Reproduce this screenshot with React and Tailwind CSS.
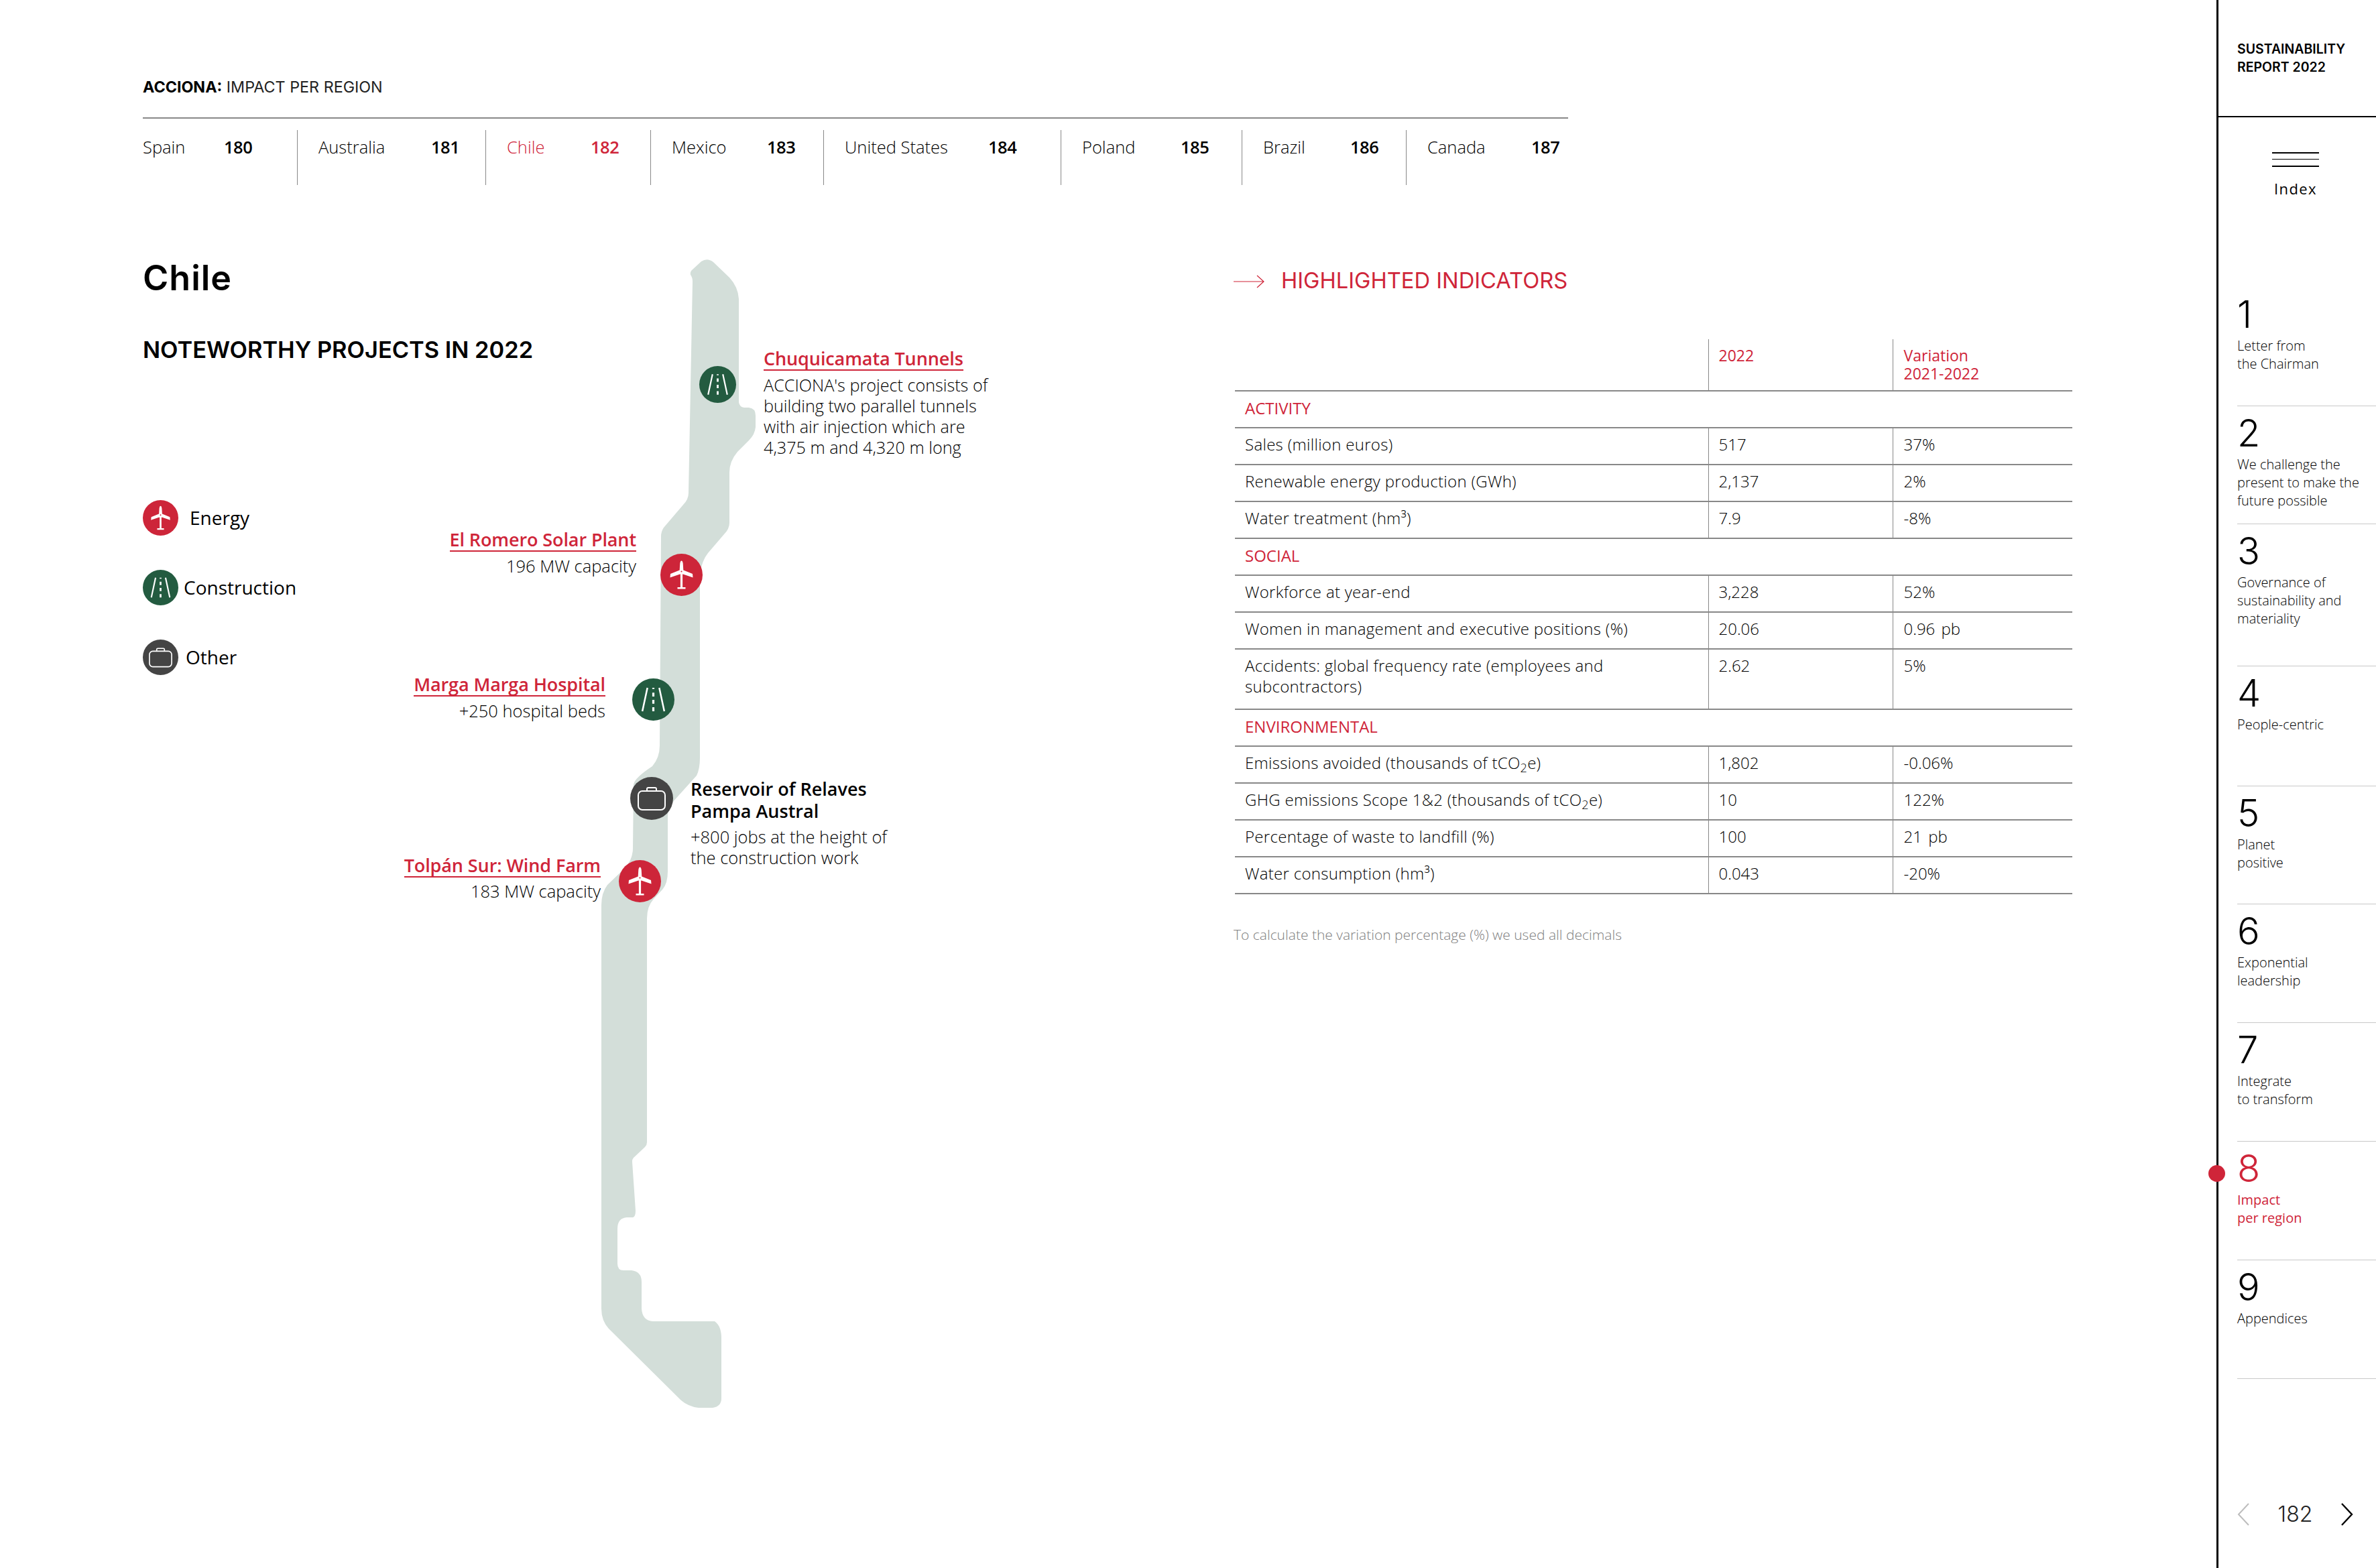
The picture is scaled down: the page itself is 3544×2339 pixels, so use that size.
import React from 'react';

const BODY = "font-['Open_Sans',sans-serif]";
const HEAD = "font-['Inter',sans-serif]";

const tabs = [
  { label: 'Spain', num: '180', w: 'w-[230px]', numCls: 'left-[121px]' },
  { label: 'Australia', num: '181', w: 'w-[281px]', numCls: 'left-[199px]' },
  { label: 'Chile', num: '182', w: 'w-[246px]', numCls: 'left-[156px]', active: true },
  { label: 'Mexico', num: '183', w: 'w-[258px]', numCls: 'left-[173px]' },
  { label: 'United States', num: '184', w: 'w-[354px]', numCls: 'left-[245px]' },
  { label: 'Poland', num: '185', w: 'w-[270px]', numCls: 'left-[178px]' },
  { label: 'Brazil', num: '186', w: 'w-[245px]', numCls: 'left-[161px]' },
  { label: 'Canada', num: '187', w: 'w-[242px]', numCls: 'left-[186px]' },
];

const chapters = [
  { n: '1', lines: ['Letter from', 'the Chairman'], h: 'h-[177px]' },
  { n: '2', lines: ['We challenge the', 'present to make the', 'future possible'], h: 'h-[176px]' },
  { n: '3', lines: ['Governance of', 'sustainability and', 'materiality'], h: 'h-[212px]' },
  { n: '4', lines: ['People-centric'], h: 'h-[179px]' },
  { n: '5', lines: ['Planet', 'positive'], h: 'h-[176px]' },
  { n: '6', lines: ['Exponential', 'leadership'], h: 'h-[177px]' },
  { n: '7', lines: ['Integrate', 'to transform'], h: 'h-[177px]' },
  { n: '8', lines: ['Impact', 'per region'], h: 'h-[177px]', active: true },
  { n: '9', lines: ['Appendices'], h: 'h-[177px]' },
];

const TurbineIcon = () => (
  <svg viewBox="-31.5 -31.5 63 63" className="w-full h-full">
    <path
      fill="#fff"
      d="M-2.8 -7 L-2.2 -17 Q-1.6 -21 0 -21 Q1.6 -21 2.2 -17 L2.8 -7 L16.5 -1.5 L17 4 L3 -0.8 L1.6 -1 L1.6 18.5 L6 18.5 L6 21 L-6 21 L-6 18.5 L-1.6 18.5 L-1.6 -1 L-3 -0.8 L-17 4 L-16.5 -1.5 Z"
    />
    <circle cx="0" cy="-5" r="1.1" fill="#cd2539" />
  </svg>
);

const RoadIcon = () => (
  <svg viewBox="-27.5 -27.5 55 55" className="w-full h-full">
    <path d="M-7.7 -15.3 L-14.3 15.3 M7.7 -15.3 L14.3 15.3" stroke="#fff" strokeWidth="2.2" fill="none" />
    <path d="M0 -15.3 V-13.7 M0 -9 V-4 M0 0.5 V5.5 M0 10 V15.3" stroke="#fff" strokeWidth="2.8" fill="none" />
  </svg>
);

const CaseIcon = () => (
  <svg viewBox="-32 -32 64 64" className="w-full h-full">
    <rect x="-20" y="-11" width="40" height="28" rx="6" stroke="#fff" strokeWidth="2" fill="none" />
    <path d="M-7 -11 V-14 Q-7 -16 -5 -16 H5 Q7 -16 7 -14 V-11" stroke="#fff" strokeWidth="2" fill="none" />
  </svg>
);

const icons = {
  energy: { bg: 'bg-[#cd2539]', Icon: TurbineIcon },
  construction: { bg: 'bg-[#235b40]', Icon: RoadIcon },
  other: { bg: 'bg-[#444444]', Icon: CaseIcon },
};

const Badge = ({ type, className }) => {
  const { bg, Icon } = icons[type];
  return (
    <div className={`rounded-full shrink-0 ${bg} ${className}`}>
      <Icon />
    </div>
  );
};

const ProjectTitle = ({ children }) => (
  <div className="text-[27px] leading-[32px] font-semibold text-[#cf2539]">
    <span className="inline-block border-b-2 border-[#cf2539] tracking-[-0.1px]">{children}</span>
  </div>
);

const Row = ({ label, a, b, tall }) => (
  <tr className={tall ? 'h-[90px]' : 'h-[55px]'}>
    <td className="align-top border-b-2 border-[#888] pl-[15px] pt-[8px] pr-[100px] tracking-[0.3px]">{label}</td>
    <td className="align-top border-b-2 border-l border-[#888] pl-[15px] pt-[8px]">{a}</td>
    <td className="align-top border-b-2 border-l border-[#888] pl-[16px] pt-[8px] [word-spacing:3px]">{b}</td>
  </tr>
);

const Category = ({ children }) => (
  <tr className="h-[55px]">
    <td colSpan={3} className="border-b-2 border-[#888] pl-[15px] pb-[5px] font-normal text-[#cf2539]">{children}</td>
  </tr>
);

const Sidebar = () => (
  <aside className={`w-[238px] h-full shrink-0 border-l-[3px] border-black relative ${BODY}`}>
    <div className="h-[175px] border-b-2 border-black pl-[28px] pt-[60px]">
      <div className={`${HEAD} text-[19.5px] leading-[27px] font-semibold text-black`}>
        SUSTAINABILITY
        <br />
        REPORT 2022
      </div>
    </div>
    <div className="h-[254px] flex flex-col items-center pr-[5px] pt-[52px]">
      <div className="w-[70px] flex flex-col">
        <div className="h-[2px] bg-black" />
        <div className="h-[1px] bg-black mt-[8px]" />
        <div className="h-[2px] bg-black mt-[9px]" />
      </div>
      <div className="text-[22px] leading-[28px] tracking-[1.4px] mt-[18px] text-black">Index</div>
    </div>
    <div className="pl-[28px]">
      {chapters.map((c) => (
        <div key={c.n} className={`${c.h} border-b border-[#c8c8c8] relative ${c.active ? 'text-[#cf2539]' : 'text-black'}`}>
          <div className={`${HEAD} text-[56px] leading-[60px] font-light pt-[10px] h-[68px]`}>{c.n}</div>
          <div className={`text-[20px] leading-[27px] mt-[5px] ${c.active ? 'font-normal' : 'font-light'}`}>
            {c.lines.map((l) => (
              <div key={l}>{l}</div>
            ))}
          </div>
          {c.active && <div className="absolute left-[-43px] top-[35px] w-[25px] h-[25px] rounded-full bg-[#cf2539]" />}
        </div>
      ))}
    </div>
    <div className="absolute left-[28px] right-[34px] top-[2241px] flex items-center justify-between">
      <svg viewBox="0 0 18 34" className="w-[18px] h-[34px]">
        <path d="M17 1 L2 17 L17 33" stroke="#bdbdbd" strokeWidth="2" fill="none" />
      </svg>
      <div className={`${HEAD} text-[32px] leading-[36px] font-light text-[#222]`}>182</div>
      <svg viewBox="0 0 18 34" className="w-[18px] h-[34px]">
        <path d="M1 1 L16 17 L1 33" stroke="#000" strokeWidth="2.4" fill="none" />
      </svg>
    </div>
  </aside>
);

const MapCanvas = () => (
  <div className="relative w-[900px] h-[1730px] shrink-0 text-[25.5px] leading-[31px] font-light text-black">
    <svg viewBox="880 380 260 1730" className="absolute left-[280px] top-0 w-[260px] h-[1730px]">
      <path
        fill="#d3ded9"
        d="M1030 410 Q1029 405 1033 402 L1046 390 Q1055 384 1064 391 L1088 414 Q1101 428 1102 446 L1102 600 Q1103 607 1110 608 L1117 608 Q1127 609 1127 620 L1127 637 Q1126 648 1117 657 L1100 674 Q1088 688 1088 705 L1088 780 Q1088 789 1080 797 L1056 825 Q1047 836 1044 856 L1044 1130 Q1044 1147 1039 1157 L1003 1197 Q996 1206 996 1218 L996 1300 Q996 1318 988 1327 L975 1341 Q965 1352 965 1370 L965 1704 Q965 1708 962 1711 L945 1727 Q943 1729 943 1733 L948 1806 Q948 1815 944 1816 L935 1816 Q921 1817 921 1833 L921 1885 Q921 1895 930 1895 L942 1895 Q957 1897 957 1912 L957 1952 Q958 1970 974 1971 L1066 1971 Q1076 1978 1076 1996 L1076 2086 Q1076 2098 1063 2100 L1042 2100 Q1026 2098 1015 2088 L908 1982 Q897 1970 897 1952 L897 1350 Q897 1332 906 1320 L932 1295 Q944 1282 944 1265 L945 1170 Q947 1160 973 1143 Q984 1130 984 1112 L986 800 Q986 793 990 787 L1019 753 Q1027 745 1027 735 L1033 420 Q1033 414 1030 410 Z"
      />
    </svg>

    <Badge type="construction" className="absolute left-[443px] top-[166px] w-[55px] h-[55px]" />
    <Badge type="energy" className="absolute left-[385px] top-[446px] w-[63px] h-[63px]" />
    <Badge type="construction" className="absolute left-[343px] top-[632px] w-[63px] h-[63px]" />
    <Badge type="other" className="absolute left-[340px] top-[779px] w-[64px] h-[64px]" />
    <Badge type="energy" className="absolute left-[323px] top-[903px] w-[63px] h-[63px]" />

    <div className="absolute left-[539px] top-[139px] w-[380px]">
      <ProjectTitle>Chuquicamata Tunnels</ProjectTitle>
      <div className="mt-[6px] text-[25.2px]">
        ACCIONA's project consists of
        <br />
        building two parallel tunnels
        <br />
        with air injection which are
        <br />
        4,375 m and 4,320 m long
      </div>
    </div>
    <div className="absolute right-[551px] top-[409px] text-right whitespace-nowrap">
      <ProjectTitle>El Romero Solar Plant</ProjectTitle>
      <div className="mt-[6px]">196 MW capacity</div>
    </div>
    <div className="absolute right-[597px] top-[625px] text-right whitespace-nowrap">
      <ProjectTitle>Marga Marga Hospital</ProjectTitle>
      <div className="mt-[6px]">+250 hospital beds</div>
    </div>
    <div className="absolute left-[430px] top-[780px] whitespace-nowrap">
      <div className="text-[27px] leading-[33px] font-semibold text-black">
        Reservoir of Relaves
        <br />
        Pampa Austral
      </div>
      <div className="mt-[7px]">
        +800 jobs at the height of
        <br />
        the construction work
      </div>
    </div>
    <div className="absolute right-[604px] top-[895px] text-right whitespace-nowrap">
      <ProjectTitle>Tolpán Sur: Wind Farm</ProjectTitle>
      <div className="mt-[5px]">183 MW capacity</div>
    </div>
  </div>
);

export default function App() {
  return (
    <div className={`flex w-[3544px] h-[2339px] bg-white overflow-hidden ${BODY}`}>
      <main className="w-[3306px] shrink-0 pl-[213px]">
        <div className={`${HEAD} h-[175px] pt-[115px] text-[23.3px] leading-[30px] text-[#222]`}>
          <span className="font-bold text-black">ACCIONA:</span> IMPACT PER REGION
        </div>
        <div className="w-[2126px] border-t-2 border-[#888] pt-[17px]">
          <div className="flex h-[82px]">
            {tabs.map((t, i) => (
              <div
                key={t.label}
                className={`${t.w} relative pt-[7px] text-[25.5px] leading-[36px] ${i > 0 ? 'border-l border-[#888] pl-[31px]' : ''} ${t.active ? 'text-[#cf2539]' : 'text-black'}`}
              >
                <span className="font-light">{t.label}</span>
                <span className={`absolute ${t.numCls} top-[7px] font-semibold tracking-[-0.5px]`}>{t.num}</span>
              </div>
            ))}
          </div>
        </div>

        <div className="flex mt-[104px]">
          <div className="w-[387px] shrink-0">
            <h1 className={`${HEAD} text-[52px] leading-[60px] font-semibold text-black mt-[5px] tracking-[1px]`}>Chile</h1>
            <h2 className={`${HEAD} text-[34.4px] leading-[40px] font-semibold text-black mt-[57px] whitespace-nowrap`}>
              NOTEWORTHY PROJECTS IN 2022
            </h2>
            <div className="mt-[204px] flex flex-col gap-[51px] text-[28px] leading-[53px] text-black">
              <div className="flex items-center gap-[17px]">
                <Badge type="energy" className="w-[53px] h-[53px]" />
                Energy
              </div>
              <div className="flex items-center gap-[8px]">
                <Badge type="construction" className="w-[53px] h-[53px]" />
                Construction
              </div>
              <div className="flex items-center gap-[11px]">
                <Badge type="other" className="w-[53px] h-[53px]" />
                Other
              </div>
            </div>
          </div>

          <MapCanvas />

          <div className="ml-[340px] w-[1251px] shrink-0">
            <div className={`${HEAD} flex items-center h-[32px] mt-[22px] text-[#cf2539] text-[32.7px] leading-[32px]`}>
              <svg viewBox="0 0 46 20" className="w-[46px] h-[20px] shrink-0 mt-[4px]">
                <path d="M0 10 H45 M35 1 L45 10 L35 19" stroke="#cf2539" strokeWidth="1.2" fill="none" />
              </svg>
              <span className="ml-[25px] whitespace-nowrap">HIGHLIGHTED INDICATORS</span>
            </div>
            <table className="mt-[72px] ml-[2px] w-[1249px] table-fixed border-collapse text-[24px] leading-[31px] font-light text-black">
              <colgroup>
                <col className="w-[706px]" />
                <col className="w-[275px]" />
                <col className="w-[268px]" />
              </colgroup>
              <tbody>
                <tr className="h-[77px] text-[#cf2539] text-[23px] leading-[27px] font-normal">
                  <td className="border-b-2 border-[#888]" />
                  <td className="align-top border-b-2 border-l border-[#888] pl-[15px] pt-[11px]">2022</td>
                  <td className="align-top border-b-2 border-l border-[#888] pl-[16px] pt-[11px]">
                    Variation
                    <br />
                    2021-2022
                  </td>
                </tr>
                <Category>ACTIVITY</Category>
                <Row label="Sales (million euros)" a="517" b="37%" />
                <Row label="Renewable energy production (GWh)" a="2,137" b="2%" />
                <Row label="Water treatment (hm³)" a="7.9" b="-8%" />
                <Category>SOCIAL</Category>
                <Row label="Workforce at year-end" a="3,228" b="52%" />
                <Row label="Women in management and executive positions (%)" a="20.06" b="0.96 pb" />
                <Row label="Accidents: global frequency rate (employees and subcontractors)" a="2.62" b="5%" tall />
                <Category>ENVIRONMENTAL</Category>
                <Row label={<>Emissions avoided (thousands of tCO<sub>2</sub>e)</>} a="1,802" b="-0.06%" />
                <Row label={<>GHG emissions Scope 1&2 (thousands of tCO<sub>2</sub>e)</>} a="10" b="122%" />
                <Row label="Percentage of waste to landfill (%)" a="100" b="21 pb" />
                <Row label="Water consumption (hm³)" a="0.043" b="-20%" />
              </tbody>
            </table>
            <p className="mt-[45px] text-[21px] leading-[30px] font-light text-[#808080]">
              To calculate the variation percentage (%) we used all decimals
            </p>
          </div>
        </div>
      </main>
      <Sidebar />
    </div>
  );
}
